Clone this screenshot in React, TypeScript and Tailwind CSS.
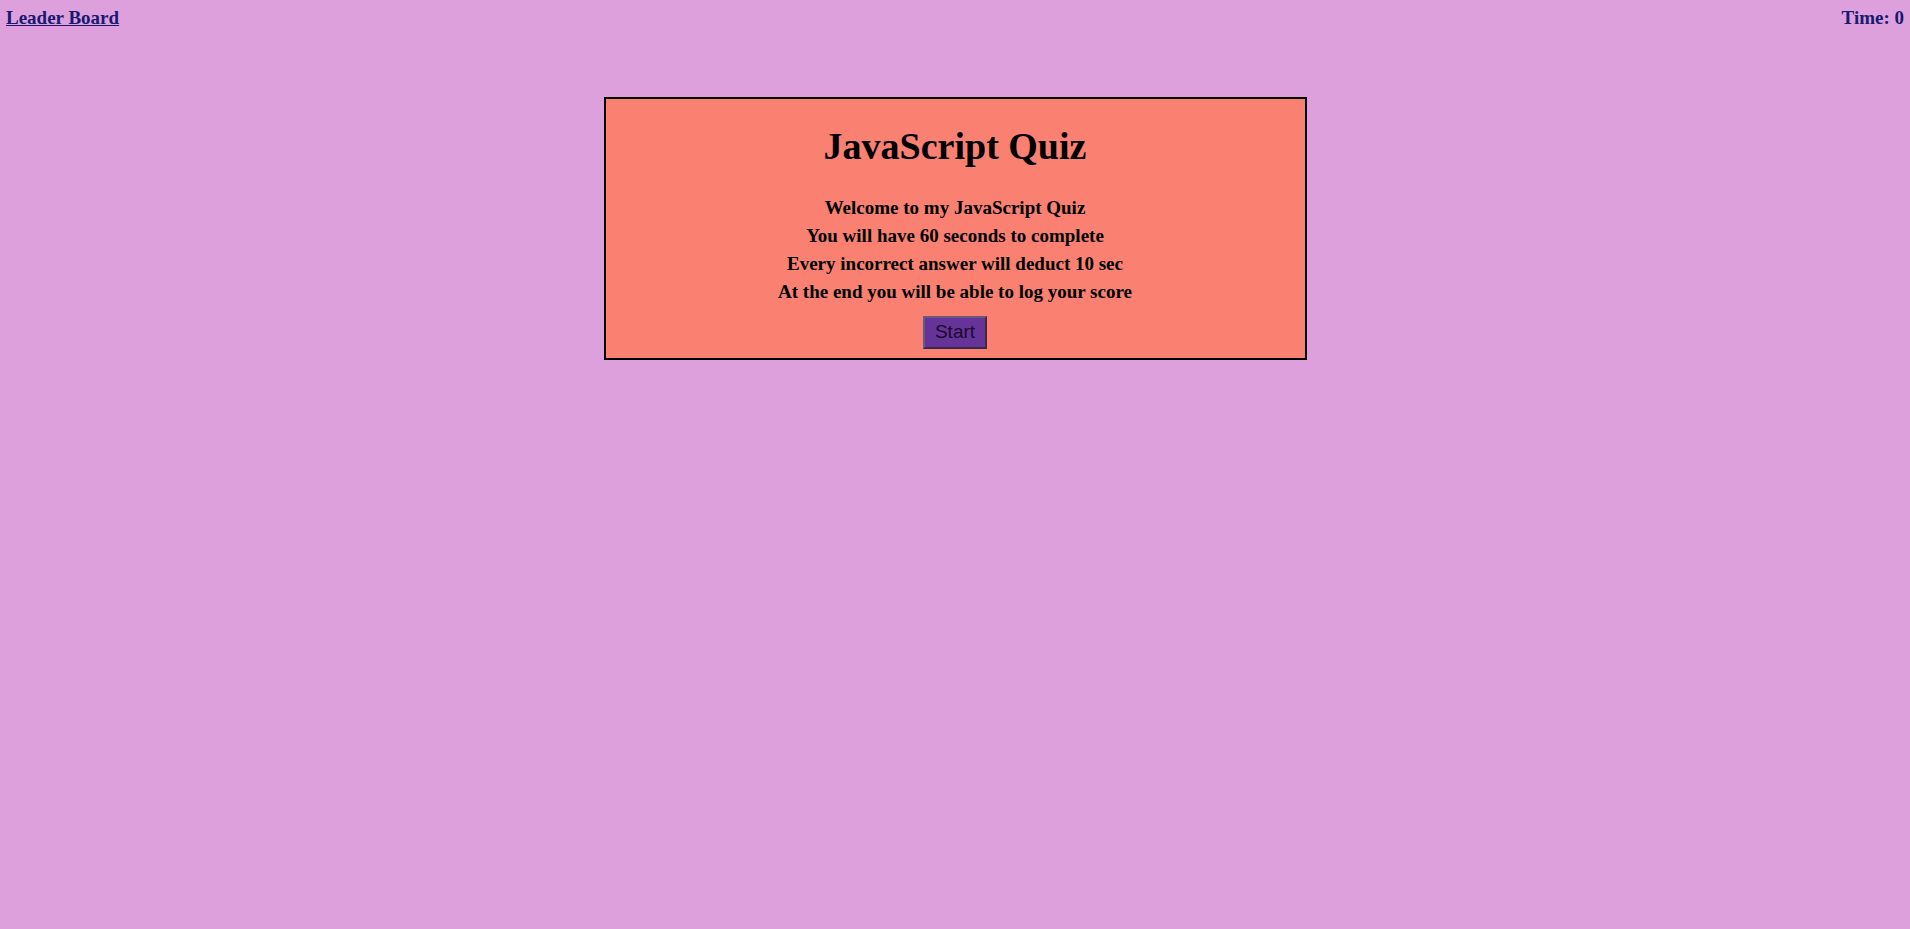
export default function App() {
  return (
    <div className="min-h-[929px] bg-[#dda0dd] font-['Liberation_Serif',serif] text-black">
      {/* top bar */}
      <header className="flex items-center justify-between px-[6px] pt-[4px] text-[19px] font-bold text-[#191970]">
        <a href="#" className="underline">
          Leader Board
        </a>
        <span>Time: 0</span>
      </header>

      {/* quiz card */}
      <main className="mx-auto mt-[64px] flex w-[703px] flex-col items-center border-2 border-black bg-[#fa8072] pb-[9px] pt-[25px]">
        <h1 className="text-[38px] font-bold leading-[44px]">JavaScript Quiz</h1>
        <div className="mt-[26px] flex flex-col items-center text-[19px] font-bold leading-[28px]">
          <p>Welcome to my JavaScript Quiz</p>
          <p>You will have 60 seconds to complete</p>
          <p>Every incorrect answer will deduct 10 sec</p>
          <p>At the end you will be able to log your score</p>
        </div>
        <button className="mt-[10px] h-[33px] w-[64px] border-2 border-[#3a2a4a] border-t-[#6a5a7a] border-l-[#6a5a7a] bg-[#663399] font-['Liberation_Sans',sans-serif] text-[19px] text-[#1a0a2e]">
          Start
        </button>
      </main>
    </div>
  );
}
